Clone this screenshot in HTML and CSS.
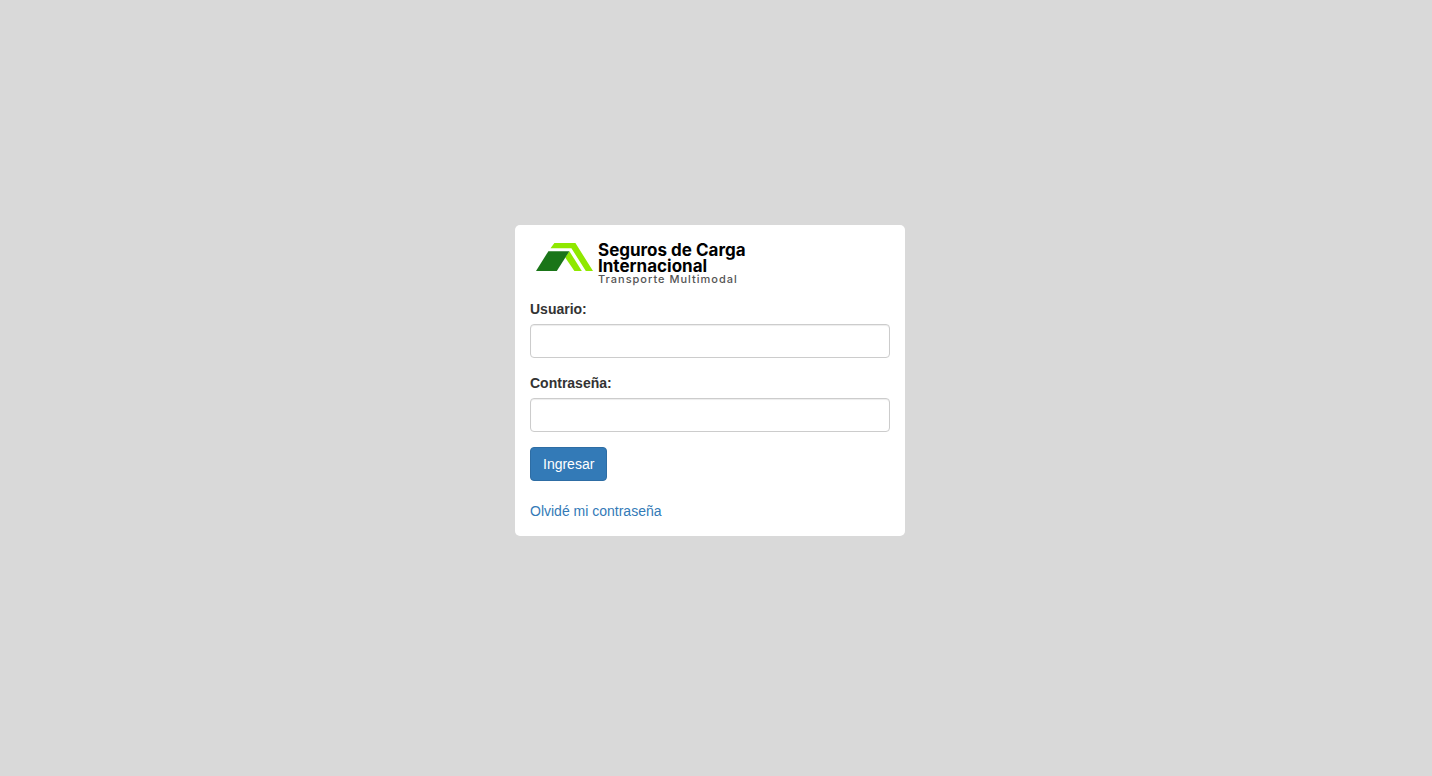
FILE: index.html
```html
<!DOCTYPE html>
<html lang="es">

<head>
    <meta charset="UTF-8">
    <meta name="viewport" content="width=device-width, initial-scale=1.0">
    <title>Seguros de Carga Internacional</title>
    <link rel="stylesheet" href="styles.css">
</head>

<body>

    <main class="login-panel">
        <div class="logo">
            <svg class="logo-mark" viewBox="0 0 57 28" aria-hidden="true">
                <path fill="#8fe800" d="M14.5 5.2 18.4 0H39.4L57 28H49.8L35.4 5.2Z" />
                <path fill="#8fe800" d="M33.4 8.2 45.8 28H38.4L29.2 14.4Z" />
                <path fill="#1a7518" d="M0 28 12.4 8.2H33.4L20.8 28Z" />
            </svg>
            <div class="logo-text">
                <div class="logo-title">Seguros de Carga<br>Internacional</div>
                <div class="logo-subtitle">Transporte Multimodal</div>
            </div>
        </div>

        <form>
            <div class="form-group">
                <label for="usuario">Usuario:</label>
                <input type="text" class="form-control" id="usuario" name="usuario">
            </div>
            <div class="form-group">
                <label for="password">Contraseña:</label>
                <input type="password" class="form-control" id="password" name="password">
            </div>
            <button type="submit" class="btn-primary">Ingresar</button>
        </form>

        <a class="forgot" href="#">Olvidé mi contraseña</a>
    </main>

</body>

</html>
```
FILE: styles.css
```css
* {
    box-sizing: border-box;
}

body {
    display: flex;
    justify-content: center;
    align-items: center;
    min-height: 100vh;
    margin: 0;
    padding: 0 12px 15px 0;
    background-color: #d9d9d9;
    color: #333;
    font-family: "Liberation Sans", Arial, sans-serif;
    font-size: 14px;
    line-height: 20px;
}

.login-panel {
    width: 100%;
    max-width: 390px;
    padding: 15px;
    background-color: #fff;
    border-radius: 5px;
}

.logo {
    display: flex;
    align-items: flex-start;
    gap: 5px;
    padding: 2px 6px 15px;
}

.logo-mark {
    width: 57px;
    height: 28px;
    margin-top: 1px;
}

.logo-title {
    color: #000;
    font-family: Inter, "Open Sans", sans-serif;
    font-size: 17px;
    font-weight: 700;
    line-height: 16px;
}

.logo-subtitle {
    color: #555;
    font-family: Inter, "Open Sans", sans-serif;
    font-size: 11px;
    font-weight: 500;
    line-height: 10px;
    letter-spacing: 1px;
}

.form-group {
    margin-bottom: 15px;
}

label {
    display: block;
    margin-bottom: 5px;
    font-weight: 700;
}

.form-control {
    display: block;
    width: 100%;
    height: 34px;
    padding: 6px 12px;
    border: 1px solid #ccc;
    border-radius: 4px;
    box-shadow: inset 0 1px 1px rgba(0, 0, 0, 0.075);
    color: #555;
    font: inherit;
}

.btn-primary {
    display: block;
    padding: 6px 12px;
    border: 1px solid #2e6da4;
    border-radius: 4px;
    background-color: #337ab7;
    color: #fff;
    font: inherit;
    cursor: pointer;
}

.forgot {
    display: block;
    margin-top: 20px;
    color: #337ab7;
    text-decoration: none;
}
```
